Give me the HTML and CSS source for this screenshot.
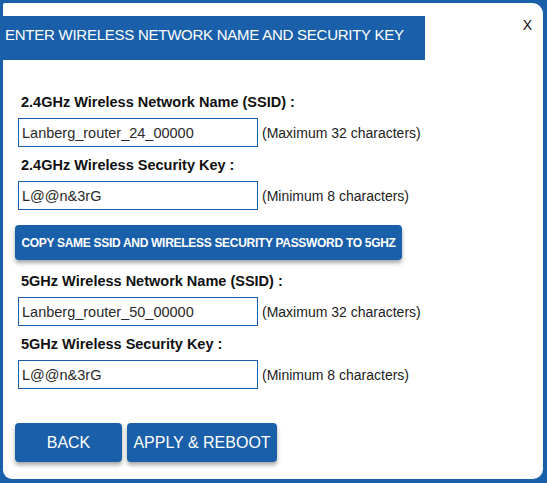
FILE: index.html
```html
<!DOCTYPE html>
<html lang="en">
<head>
    <meta charset="UTF-8">
    <title>Wireless Settings</title>
    <link rel="stylesheet" href="styles.css">
</head>
<body>
    <div class="panel">
        <div class="title-row">
            <h1 class="title">ENTER WIRELESS NETWORK NAME AND SECURITY KEY</h1>
            <span class="close">X</span>
        </div>
        <form class="wifi-form">
            <label class="field-label">2.4GHz Wireless Network Name (SSID) :</label>
            <div class="field-row">
                <input class="field-input" type="text" value="Lanberg_router_24_00000">
                <span class="hint">(Maximum 32 characters)</span>
            </div>
            <label class="field-label">2.4GHz Wireless Security Key :</label>
            <div class="field-row">
                <input class="field-input" type="text" value="L@@n&amp;3rG">
                <span class="hint">(Minimum 8 characters)</span>
            </div>
            <button type="button" class="copy-btn">COPY SAME SSID AND WIRELESS SECURITY PASSWORD TO 5GHZ</button>
            <label class="field-label">5GHz Wireless Network Name (SSID) :</label>
            <div class="field-row">
                <input class="field-input" type="text" value="Lanberg_router_50_00000">
                <span class="hint">(Maximum 32 characters)</span>
            </div>
            <label class="field-label">5GHz Wireless Security Key :</label>
            <div class="field-row">
                <input class="field-input" type="text" value="L@@n&amp;3rG">
                <span class="hint">(Minimum 8 characters)</span>
            </div>
            <div class="actions">
                <button type="button" class="nav-btn back-btn">BACK</button>
                <button type="button" class="nav-btn apply-btn">APPLY &amp; REBOOT</button>
            </div>
        </form>
    </div>
</body>
</html>
```

FILE: styles.css
```css
html, body {
    margin: 0;
    padding: 0;
}
body {
    background: #1a5fa9;
    font-family: 'Liberation Sans', Arial, sans-serif;
    color: #222;
    padding: 3px 4px 4px 3px;
    height: 483px;
    box-sizing: border-box;
}
.panel {
    background: #fff;
    height: 100%;
    border-radius: 2px 11px 10px 9px;
    box-sizing: border-box;
}
.title-row {
    display: flex;
    justify-content: space-between;
    align-items: flex-start;
    padding-top: 13px;
}
.title {
    margin: 0 0 0 -3px;
    width: 425px;
    height: 44px;
    box-sizing: border-box;
    padding: 10px 0 0 5px;
    background: #1a5fa9;
    color: #fff;
    font-weight: normal;
    font-size: 15px;
    line-height: 18px;
    letter-spacing: -0.25px;
    white-space: nowrap;
}
.close {
    font-size: 14px;
    line-height: 14px;
    margin: 2px 11px 0 0;
    color: #111;
}
.wifi-form {
    padding: 0 0 0 12px;
    display: flex;
    flex-direction: column;
    align-items: flex-start;
}
.field-label {
    display: block;
    font-weight: bold;
    font-size: 14.5px;
    line-height: 16px;
    margin: 34px 0 0 6px;
    color: #111;
}
.field-label + .field-row {
    margin-top: 8px;
}
.field-row + .field-label {
    margin-top: 10px;
}
.field-row {
    display: flex;
    align-items: center;
    margin-left: 3px;
}
.field-input {
    width: 240px;
    height: 29px;
    box-sizing: border-box;
    border: 1px solid #1a5fa9;
    padding: 0 3px;
    font-family: 'Liberation Sans', Arial, sans-serif;
    font-size: 14.5px;
    color: #2a2a2a;
    margin: 0;
}
.hint {
    font-size: 14px;
    margin-left: 4px;
    color: #222;
}
.copy-btn {
    margin-top: 15px;
    width: 387px;
    height: 35px;
    padding: 0;
    background: #1a5fa9;
    color: #fff;
    border: none;
    border-radius: 4px;
    font-family: 'Liberation Sans', Arial, sans-serif;
    font-weight: bold;
    font-size: 12px;
    letter-spacing: -0.3px;
    box-shadow: 0 3px 4px rgba(0, 0, 0, 0.35);
    cursor: pointer;
}
.copy-btn + .field-label {
    margin-top: 13px;
}
.actions {
    display: flex;
    gap: 5px;
    margin-top: 34px;
}
.nav-btn {
    height: 39px;
    padding: 0;
    background: #1a5fa9;
    color: #fff;
    border: none;
    border-radius: 4px;
    font-family: 'Liberation Sans', Arial, sans-serif;
    font-size: 16px;
    box-shadow: 0 3px 4px rgba(0, 0, 0, 0.35);
    cursor: pointer;
}
.back-btn {
    width: 107px;
}
.apply-btn {
    width: 150px;
}
```
